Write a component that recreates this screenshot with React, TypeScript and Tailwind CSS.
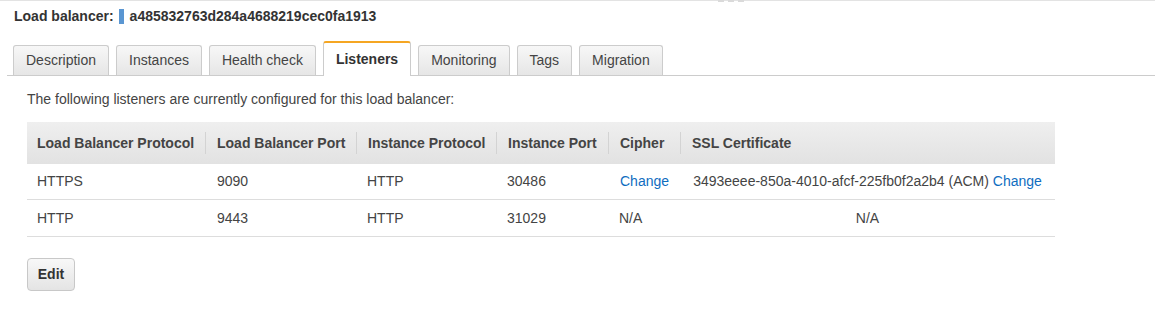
import React from 'react';

const tabs = ['Description', 'Instances', 'Health check', 'Listeners', 'Monitoring', 'Tags', 'Migration'];

const cols = [
  { label: 'Load Balancer Protocol', w: 'w-[178px]' },
  { label: 'Load Balancer Port', w: 'w-[151px]' },
  { label: 'Instance Protocol', w: 'w-[140px]' },
  { label: 'Instance Port', w: 'w-[112px]' },
  { label: 'Cipher', w: 'w-[72px]' },
  { label: 'SSL Certificate', w: 'w-[375px]' },
];

const App: React.FC = () => {
  return (
    <div className="relative w-[1155px] h-[312px] bg-white border-t border-[#e3e3e3] font-['Liberation_Sans',Arial,sans-serif] text-[14px] text-[#444]">
      {/* drag handle */}
      <div className="absolute -top-px left-[718px] flex gap-[4px]">
        <span className="w-[6px] h-[2px] bg-[#dadada]" />
        <span className="w-[6px] h-[2px] bg-[#dadada]" />
        <span className="w-[6px] h-[2px] bg-[#dadada]" />
      </div>

      {/* Header */}
      <div className="flex items-center h-[29px] pl-[14px] pt-px">
        <span className="font-bold text-[#333]">Load balancer:</span>
        <span className="ml-[5px] w-[5px] h-[15px] bg-[#5a96d2]" />
        <span className="ml-[6px] font-bold text-[#333]">a485832763d284a4688219cec0fa1913</span>
      </div>

      {/* Tabs */}
      <div className="mt-[11px] ml-[7px] flex items-end gap-[7px] pl-[6px] border-b border-[#cccccc] h-[35px]">
        {tabs.map((t) =>
          t === 'Listeners' ? (
            <div
              key={t}
              className="-mb-px h-[35px] px-[12px] flex items-center bg-white border border-b-0 border-[#cccccc] border-t-[2px] border-t-[#f5a623] rounded-t-[3px] font-bold text-[#333]"
            >
              {t}
            </div>
          ) : (
            <div
              key={t}
              className="h-[30px] px-[12px] flex items-center bg-gradient-to-b from-[#f7f7f7] to-[#e6e6e6] border border-b-0 border-[#cccccc] rounded-t-[3px] text-[#444]"
            >
              {t}
            </div>
          )
        )}
      </div>

      {/* Content */}
      <div className="px-[27px]">
        <p className="mt-[15px] leading-[16px]">The following listeners are currently configured for this load balancer:</p>

        <div className="mt-[15px] w-[1028px]">
          {/* header */}
          <div className="flex h-[42px] bg-gradient-to-b from-[#efefef] to-[#e2e2e2] font-bold text-[#444]">
            {cols.map((c, i) => (
              <div key={c.label} className={`${c.w} flex items-center`}>
                {i === 0 ? (
                  <span className="pl-[10px]">{c.label}</span>
                ) : (
                  <span className="pl-[11px] h-[22px] flex items-center border-l border-[#d3d3d3]">{c.label}</span>
                )}
              </div>
            ))}
          </div>

          {/* rows */}
          <div className="flex h-[36px] items-center border-b border-[#dddddd]">
            <div className="w-[178px] pl-[10px]">HTTPS</div>
            <div className="w-[151px] pl-[12px]">9090</div>
            <div className="w-[140px] pl-[11px]">HTTP</div>
            <div className="w-[112px] pl-[11px]">30486</div>
            <div className="w-[72px] pl-[12px]">
              <a href="#" className="text-[#0f6dbf]">Change</a>
            </div>
            <div className="w-[375px] text-center">
              3493eeee-850a-4010-afcf-225fb0f2a2b4 (ACM){' '}
              <a href="#" className="text-[#0f6dbf]">Change</a>
            </div>
          </div>
          <div className="flex h-[37px] items-center border-b border-[#dddddd]">
            <div className="w-[178px] pl-[10px]">HTTP</div>
            <div className="w-[151px] pl-[12px]">9443</div>
            <div className="w-[140px] pl-[11px]">HTTP</div>
            <div className="w-[112px] pl-[11px]">31029</div>
            <div className="w-[72px] pl-[11px]">N/A</div>
            <div className="w-[375px] text-center">N/A</div>
          </div>
        </div>

        <button
          type="button"
          className="mt-[21px] w-[48px] h-[33px] rounded-[4px] border border-[#c8c8c8] bg-gradient-to-b from-[#f8f8f8] to-[#e4e4e4] font-bold text-[#333] text-[14px]"
        >
          Edit
        </button>
      </div>
    </div>
  );
};

export default App;
